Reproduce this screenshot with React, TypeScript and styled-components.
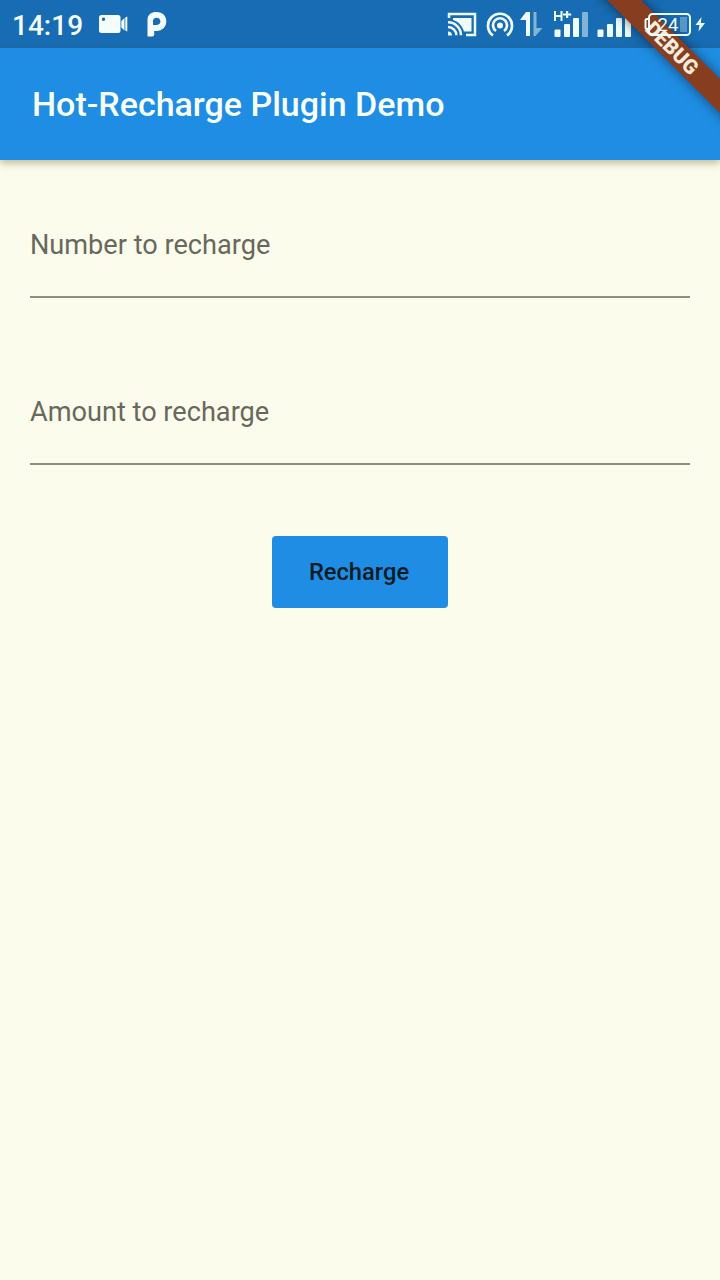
import React from 'react';
import styled, { createGlobalStyle } from 'styled-components';

const Global = createGlobalStyle`
  * { box-sizing: border-box; }
  body { margin: 0; background: #fcfced; font-family: Roboto, sans-serif; }
`;
const Screen = styled.div`
  position: relative;
  width: 720px;
  height: 1280px;
  overflow: hidden;
  background: #fcfced;
`;
const StatusBar = styled.header`
  display: flex;
  align-items: center;
  justify-content: space-between;
  height: 48px;
  padding: 0 80px 0 12px;
  background: #176cb3;
  color: #f4fdfb;
`;
const StatusGroup = styled.div`
  display: flex;
  align-items: center;
  height: 48px;
`;
const Clock = styled.span`
  width: 86px;
  font-size: 28px;
  font-weight: 500;
  line-height: 48px;
  padding-top: 3px;
`;
const Glyphs = styled.svg`
  display: block;
  flex: none;
`;
const AppBar = styled.div`
  display: flex;
  align-items: center;
  height: 112px;
  padding-left: 32px;
  background: #1f8de3;
  box-shadow: 0 3px 8px rgba(90, 80, 20, 0.4);
`;
const Title = styled.h1`
  margin: 0;
  color: #f8fff4;
  font-size: 34px;
  font-weight: 500;
  line-height: 40px;
  white-space: nowrap;
`;
const Form = styled.main`
  display: flex;
  flex-direction: column;
  align-items: center;
  padding: 64px 30px 0;
`;
const Field = styled.label<{ $gap: number }>`
  display: block;
  width: 100%;
  height: 74px;
  margin-bottom: ${(p) => p.$gap}px;
  padding-top: 5px;
  border-bottom: 2px solid #8e8d80;
  color: #68685c;
  font-size: 27.15px;
  line-height: 32px;
`;
const Button = styled.button`
  width: 176px;
  height: 72px;
  padding: 0 2px 0 0;
  border: 0;
  border-radius: 4px;
  background: #1f8de3;
  color: #071c24;
  font: 500 23.7px/72px Roboto, sans-serif;
`;
const Ribbon = styled.div`
  position: absolute;
  top: 0;
  right: 0;
  width: 112px;
  height: 112px;
`;
const Band = styled.div`
  position: absolute;
  left: -36px;
  top: 36px;
  width: 200px;
  height: 24px;
  transform: rotate(45deg);
  background: #873d1f;
  box-shadow: 0 0 12px rgba(0, 0, 0, 0.5);
  color: #f4ebdc;
  font-size: 20.4px;
  font-weight: 900;
  line-height: 24px;
  text-align: center;
`;
const BatteryLayer = styled.div`
  position: absolute;
  top: 0;
  right: 0;
  width: 80px;
  height: 48px;
`;

function LeftGlyphs() {
  return (
    <Glyphs width="72" height="48" viewBox="98 0 72 48" fill="#f4fdfb">
      <path fillRule="evenodd" d="M101.500 15h16.500q2.500 0 2.500 2.500v13q0 2.500-2.500 2.500h-16.500q-2.500 0-2.500-2.500v-13q0-2.500 2.500-2.500Zm2 2.500a1.700 1.700 0 1 0 0 3.400 1.700 1.700 0 0 0 0-3.400Z" />
      <path d="M121.300 21l3.200-3v12.500l-3.200-3ZM125.300 17.500l2-1v15l-2-1Z" />
      <path fillRule="evenodd" d="M147.500 36.500V19.500C147.500 14.500 151.500 12 156.500 12c6 0 9.800 3.800 9.800 9.300 0 5.700-4 9.600-9.800 9.600h-2.300v3.600q0 2-2 2Zm5.500-11.500h3.200c2.600 0 4.200-1.500 4.200-3.600s-1.600-3.700-3.900-3.700c-2.200 0-3.500 1.400-3.500 3.500Z" />
    </Glyphs>
  );
}

function SignalGlyphs() {
  return (
    <Glyphs width="200" height="48" viewBox="440 0 200 48" fill="#eefcfa">
      <g fill="none" stroke="#eefcfa" strokeWidth="2.500">
        <path d="M449 18v-4h26v21h-9" />
        <path d="M448 22.300a13 13 0 0 1 13 13M448 27a8.300 8.300 0 0 1 8.300 8.300" />
      </g>
      <path d="M448 31.500a4 4 0 0 1 4 4h-4ZM453 18h18.500v13.500h-7.500C462 25 458 21.500 453 20Z" />
      <g fill="none" stroke="#eefcfa" strokeWidth="2.700">
        <path d="M493 35.500a12 12 0 1 1 14 0M496 31a7 7 0 1 1 8 0" />
      </g>
      <circle cx="500" cy="25.500" r="3" />
      <path d="M526 12h4v24h-4V20h-6Z" />
      <path opacity=".5" d="M533.500 12h3v16h6l-7 8h-2Z" />
      <path d="M554 11h2v4h4.500v-4h2v10h-2v-4H556v4h-2ZM566 11h2.200v2.500h3v2h-3V18H566v-2.500h-3v-2h3Z" />
      <rect x="554.500" y="29.500" width="6" height="7.500" rx="1" />
      <rect x="564" y="24" width="6" height="13" rx="1" />
      <rect x="573" y="18" width="6" height="19" rx="1" />
      <rect x="582" y="12" width="6" height="25" rx="1" opacity=".5" />
      <rect x="597.500" y="29.500" width="6" height="7.500" rx="1" />
      <rect x="607" y="24" width="6" height="13" rx="1" />
      <rect x="616" y="18" width="6" height="19" rx="1" />
      <rect x="625" y="12" width="6" height="25" rx="1" />
    </Glyphs>
  );
}

function Battery() {
  return (
    <Glyphs width="80" height="48" viewBox="640 0 80 48" fill="#eefcfa">
      <rect x="680" y="17" width="7" height="15" opacity=".3" />
      <rect x="649" y="14" width="41" height="21" rx="3.500" fill="none" stroke="#eefcfa" strokeWidth="2" />
      <path d="M648 19h-1q-1.500 0-1.500 1.500v7q0 1.500 1.500 1.500h1" fill="none" stroke="#eefcfa" strokeWidth="2" />
      <text x="657.500" y="31" fontFamily="Roboto, sans-serif" fontSize="18.500">24</text>
      <path d="M701.500 17l-6 8h4l-1 6.500 6.500-8.500h-4.200Z" />
    </Glyphs>
  );
}

export default function App() {
  return (
    <>
      <Global />
      <Screen>
        <StatusBar>
          <StatusGroup>
            <Clock>14:19</Clock>
            <LeftGlyphs />
          </StatusGroup>
          <StatusGroup>
            <SignalGlyphs />
          </StatusGroup>
        </StatusBar>
        <AppBar>
          <Title>Hot-Recharge Plugin Demo</Title>
        </AppBar>
        <Form>
          <Field $gap={93}>Number to recharge</Field>
          <Field $gap={71}>Amount to recharge</Field>
          <Button>Recharge</Button>
        </Form>
        <Ribbon>
          <Band>DEBUG</Band>
        </Ribbon>
        <BatteryLayer>
          <Battery />
        </BatteryLayer>
      </Screen>
    </>
  );
}
